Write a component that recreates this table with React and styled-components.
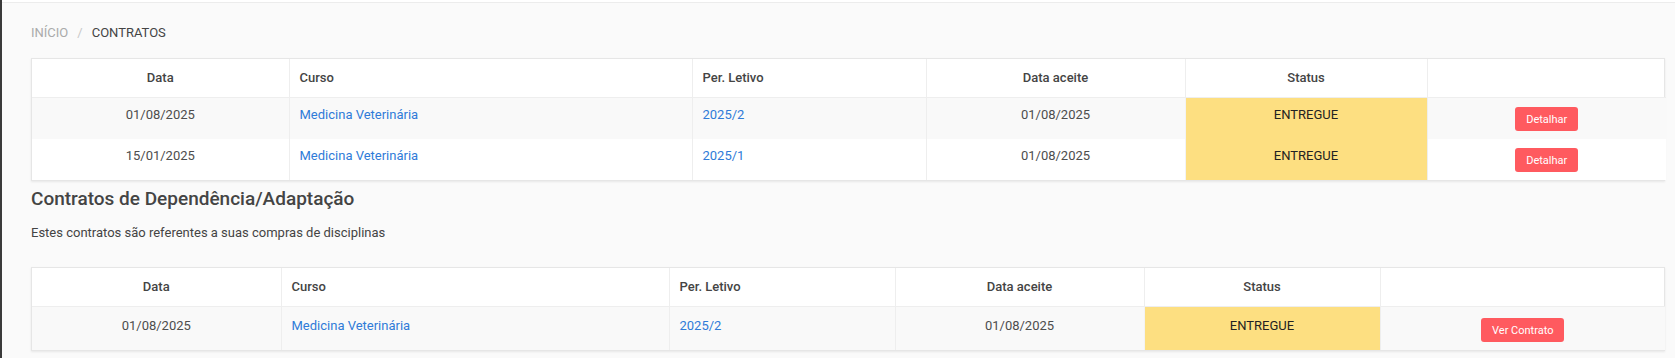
import React from 'react';
import styled, { createGlobalStyle } from 'styled-components';

const GlobalStyle = createGlobalStyle`
    html, body {
        margin: 0;
        padding: 0;
        background-color: #fafafa;
    }
    body {
        font-family: Roboto, 'Liberation Sans', Arial, sans-serif;
    }
`;

const Page = styled.div`
    min-height: 358px;
    background-color: #fafafa;
    border-left: 2px solid #3a3a3a;
    box-sizing: border-box;
`;

const TopStrip = styled.div`
    height: 2px;
    background-color: #fff;
    border-bottom: 1px solid #ececec;
`;

const Content = styled.div`
    padding: 21px 10px 10px 29px;
`;

const Breadcrumb = styled.div`
    display: flex;
    align-items: center;
    gap: 9px;
    font-size: 13px;
    line-height: 18px;
    text-transform: uppercase;
`;

const Crumb = styled.span`
    color: ${props => (props.active ? '#444' : '#aaa')};
`;

const Separator = styled.span`
    color: #c8c8c8;
`;

const TableBox = styled.div`
    margin-top: ${props => props.top}px;
    background-color: #fff;
    border: 1px solid #e6e6e6;
    box-shadow: 0 1px 2px rgba(0, 0, 0, 0.08);
`;

const Table = styled.table`
    width: 100%;
    border-collapse: collapse;
    table-layout: fixed;
    font-size: 13px;
`;

const Th = styled.th`
    padding: 10px 10px;
    line-height: 18px;
    font-weight: 500;
    color: #444;
    text-align: ${props => props.align || 'center'};
    border-left: 1px solid #eee;
    border-bottom: 1px solid #eee;
    &:first-child {
        border-left: none;
    }
`;

const Row = styled.tr`
    background-color: ${props => (props.striped ? '#f9f9f9' : '#fff')};
    & + & td {
        border-top: 1px solid #eee;
    }
`;

const Td = styled.td`
    padding: ${props => (props.roomy ? '10px 10px 8px' : '8px 10px')};
    line-height: 18px;
    vertical-align: top;
    color: #4d4d4d;
    text-align: ${props => props.align || 'center'};
    border-left: 1px solid #eee;
    &:first-child {
        border-left: none;
    }
`;

const StatusTd = styled(Td)`
    background-color: #fddf81;
    color: #222;
    border-left-color: #f3f3f3;
`;

const Link = styled.a`
    color: #2f7bd8;
    text-decoration: none;
`;

const Button = styled.button`
    margin-top: 1px;
    height: 24px;
    padding: 0 11px;
    border: none;
    border-radius: 3px;
    background-color: #ff5a5f;
    color: #fff;
    font-family: Roboto, 'Liberation Sans', Arial, sans-serif;
    font-size: 11px;
    cursor: pointer;
`;

const Title = styled.h2`
    margin: 7px 0 0 0;
    font-size: 19px;
    line-height: 22px;
    font-weight: 500;
    color: #444;
`;

const Description = styled.p`
    margin: 14px 0 0 0;
    font-size: 13px;
    line-height: 18px;
    color: #444;
`;

const headers = [
    { label: 'Data', align: 'center' },
    { label: 'Curso', align: 'left' },
    { label: 'Per. Letivo', align: 'left' },
    { label: 'Data aceite', align: 'center' },
    { label: 'Status', align: 'center' },
    { label: '', align: 'center' },
];

const contracts = [
    { data: '01/08/2025', curso: 'Medicina Veterinária', periodo: '2025/2', aceite: '01/08/2025', status: 'ENTREGUE' },
    { data: '15/01/2025', curso: 'Medicina Veterinária', periodo: '2025/1', aceite: '01/08/2025', status: 'ENTREGUE' },
];

const dependencias = [
    { data: '01/08/2025', curso: 'Medicina Veterinária', periodo: '2025/2', aceite: '01/08/2025', status: 'ENTREGUE' },
];

function ContractTable({ rows, widths, action, top, roomy }) {
    return (
        <TableBox top={top}>
            <Table>
                <colgroup>
                    {widths.map((w, i) => (
                        <col key={i} style={{ width: w }} />
                    ))}
                </colgroup>
                <thead>
                    <tr>
                        {headers.map((h, i) => (
                            <Th key={i} align={h.align}>{h.label}</Th>
                        ))}
                    </tr>
                </thead>
                <tbody>
                    {rows.map((r, i) => (
                        <Row key={i} striped={i % 2 === 0}>
                            <Td roomy={roomy}>{r.data}</Td>
                            <Td roomy={roomy} align="left"><Link href="#">{r.curso}</Link></Td>
                            <Td roomy={roomy} align="left"><Link href="#">{r.periodo}</Link></Td>
                            <Td roomy={roomy}>{r.aceite}</Td>
                            <StatusTd roomy={roomy}>{r.status}</StatusTd>
                            <Td roomy={roomy}><Button>{action}</Button></Td>
                        </Row>
                    ))}
                </tbody>
            </Table>
        </TableBox>
    );
}

export default function App() {
    return (
        <Page>
            <GlobalStyle />
            <TopStrip />
            <Content>
                <Breadcrumb>
                    <Crumb>Início</Crumb>
                    <Separator>/</Separator>
                    <Crumb active>Contratos</Crumb>
                </Breadcrumb>

                <ContractTable
                    rows={contracts}
                    widths={[257, 403, 234, 259, 242, 239]}
                    action="Detalhar"
                    top={16}
                />

                <Title>Contratos de Dependência/Adaptação</Title>
                <Description>Estes contratos são referentes a suas compras de disciplinas</Description>

                <ContractTable
                    rows={dependencias}
                    widths={[249, 388, 226, 249, 236, 285]}
                    action="Ver Contrato"
                    top={25}
                    roomy
                />
            </Content>
        </Page>
    );
}
